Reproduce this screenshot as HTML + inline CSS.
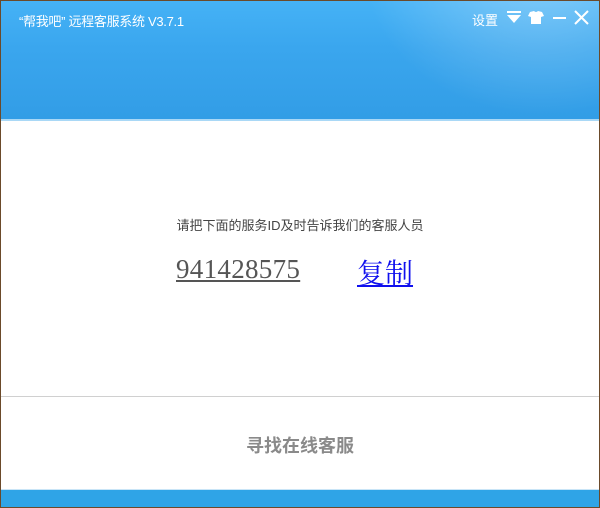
<!DOCTYPE html>
<html><head><meta charset="utf-8"><style>
html,body{margin:0;padding:0;}
body{width:600px;height:508px;position:relative;overflow:hidden;background:#6b4a2a;font-family:"Liberation Sans","Noto Sans CJK SC",sans-serif;}
#win{position:absolute;left:1px;top:1px;width:598px;height:506px;background:#fff;overflow:hidden;}
#hd{position:absolute;left:0;top:0;width:598px;height:118px;background:linear-gradient(180deg,#45b2f6 0%,#3aa6ee 40%,#329de6 100%);}
#hd:after{content:"";position:absolute;left:330px;top:-80px;width:300px;height:220px;background:radial-gradient(ellipse at 70% 20%,rgba(255,255,255,.35),rgba(255,255,255,0) 60%);}
#strip{position:absolute;left:0;top:118px;width:598px;height:2px;background:#a9d8f6;}
#title{position:absolute;left:18px;top:10px;color:#fff;font-size:13px;letter-spacing:-0.3px;}
#set{position:absolute;left:471px;top:9px;color:#fff;font-size:13px;}
#tip{position:absolute;left:0;width:598px;top:214px;text-align:center;font-size:13px;color:#444;}
#id{position:absolute;left:175px;top:253px;font-family:"Liberation Serif",serif;font-size:27px;color:#555;text-decoration:underline;letter-spacing:0.3px;}
#cp{position:absolute;left:356px;top:251px;font-size:28px;color:#1010ee;text-decoration:underline;font-family:"Liberation Serif","Noto Serif CJK SC",serif;}
#line{position:absolute;left:0;top:395px;width:598px;height:1px;background:#d0d0d0;}
#find{position:absolute;left:0;width:598px;top:431px;text-align:center;font-size:18px;font-weight:bold;color:#8a8a8a;}
#ft{position:absolute;left:0;top:488px;width:598px;height:18px;background:#2fa4e7;border-top:1px solid #c9e5f7;}
</style></head><body><div id="win">
<div id="hd"></div><div id="strip"></div>
<div id="title">“帮我吧” 远程客服系统 V3.7.1</div>
<div id="set">设置</div>
<svg style="position:absolute;left:505px;top:9px" width="90" height="16" viewBox="0 0 90 16">
<rect x="1" y="1" width="14" height="2" fill="#fff"/><path d="M1 5 H15 L8 13 Z" fill="#fff"/>
<path d="M24 2 L28 1 Q30 3 32 1 L36 2 L38 6 L35 7 V14 H25 V7 L22 6 Z" fill="#fff"/>
<rect x="47" y="7" width="13" height="2" fill="#fff"/>
<path d="M69 1 L82 14 M82 1 L69 14" stroke="#fff" stroke-width="2"/>
</svg>
<div id="tip">请把下面的服务ID及时告诉我们的客服人员</div>
<div id="id">941428575</div>
<div id="cp">复制</div>
<div id="line"></div>
<div id="find">寻找在线客服</div>
<div id="ft"></div>
</div></body></html>
